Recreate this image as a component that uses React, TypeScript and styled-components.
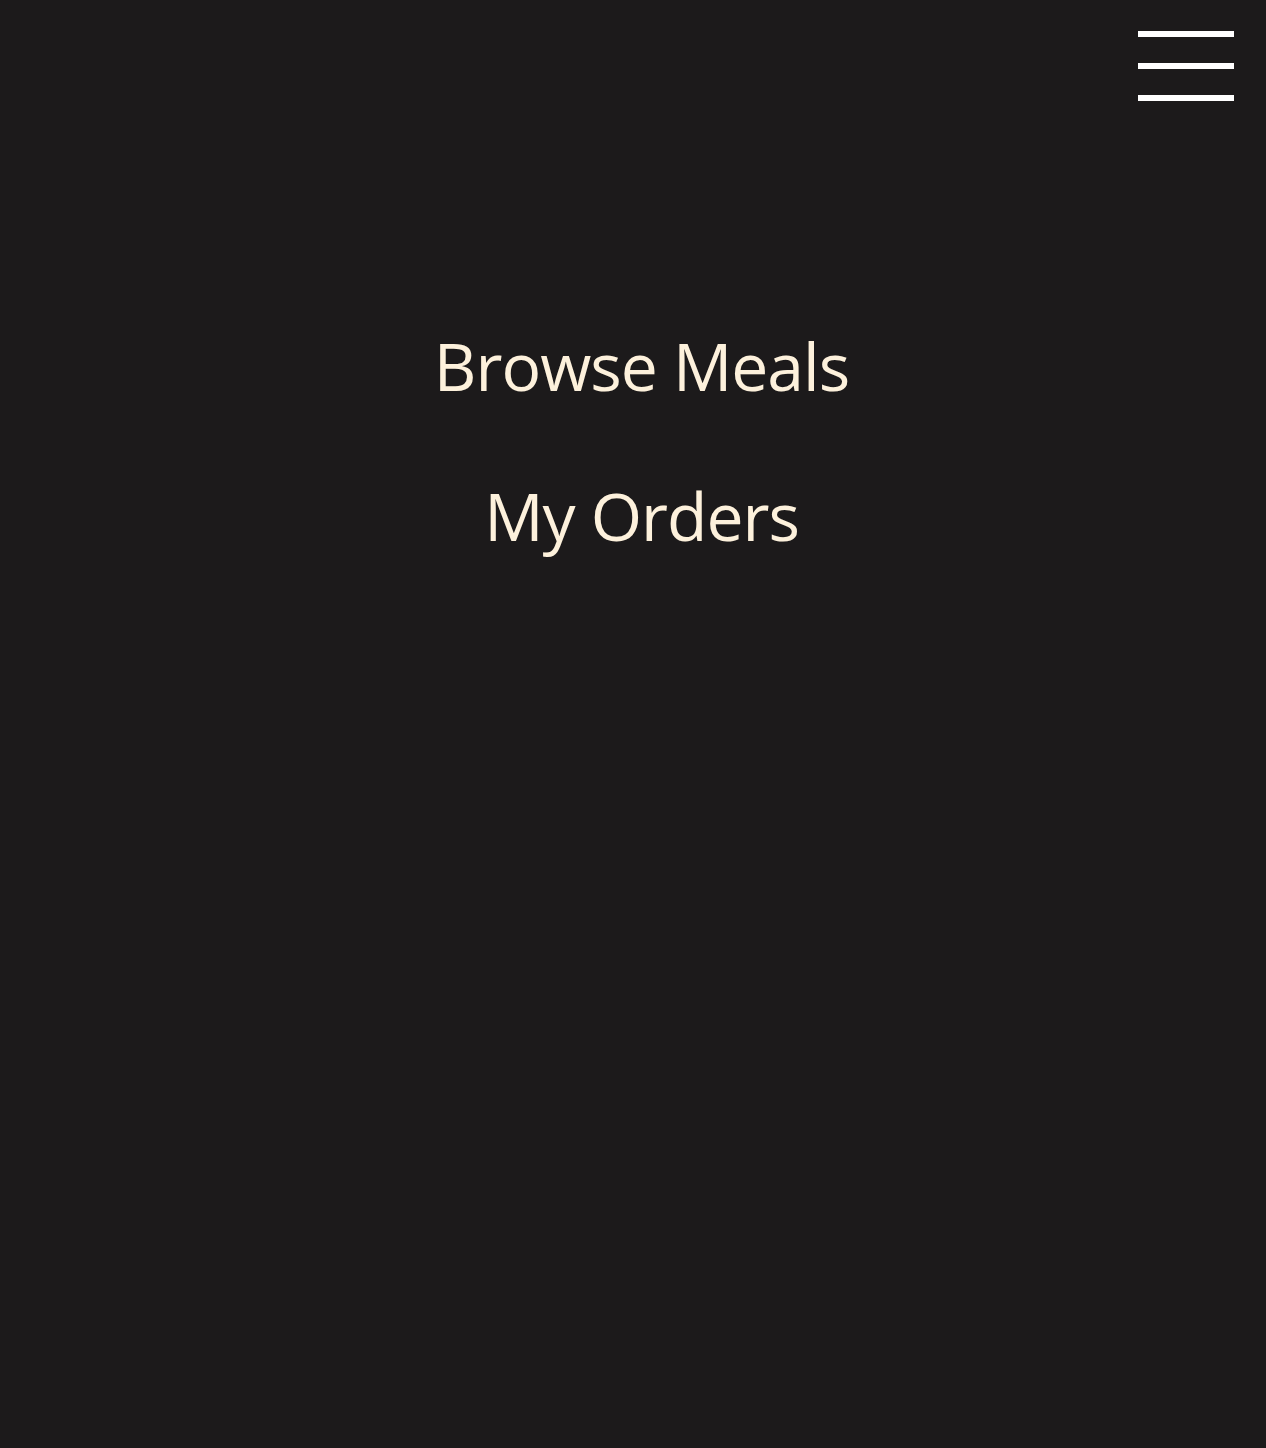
import React from "react";
import styled, {createGlobalStyle} from "styled-components";

const GlobalStyle = createGlobalStyle`
  html, body {
    margin: 0;
    padding: 0;
    background: #1c1a1b;
  }
  body {
    font-family: "Open Sans", "Noto Sans", sans-serif;
  }
`

const Screen = styled.div`
  position: relative;
  min-height: 1448px;
  background: #1c1a1b;
  display: flex;
  flex-direction: column;
`

const TopBar = styled.header`
  display: flex;
  justify-content: flex-end;
  padding: 31px 32px 0 0;
`

const Burger = styled.button`
  display: flex;
  flex-direction: column;
  gap: 26px;
  width: 96px;
  padding: 0;
  border: 0;
  background: none;
  cursor: pointer;
`

const BurgerLine = styled.span`
  display: block;
  height: 6px;
  width: 100%;
  background: #ffffff;
`

const Menu = styled.nav`
  display: flex;
  flex-direction: column;
  align-items: center;
  gap: 60px;
  margin-top: 219px;
  padding-left: 17px;
`

const MenuLink = styled.a`
  color: #fdf1dc;
  font-size: 66px;
  line-height: 90px;
  letter-spacing: -1px;
  text-decoration: none;
  cursor: pointer;
`

const App: React.FC = () => {
    return <>
        <GlobalStyle/>
        <Screen>
            <TopBar>
                <Burger aria-label={"menu"}>
                    <BurgerLine/>
                    <BurgerLine/>
                    <BurgerLine/>
                </Burger>
            </TopBar>
            <Menu>
                <MenuLink href={"#meals"}>Browse Meals</MenuLink>
                <MenuLink href={"#orders"}>My Orders</MenuLink>
            </Menu>
        </Screen>
    </>
}

export default App;
